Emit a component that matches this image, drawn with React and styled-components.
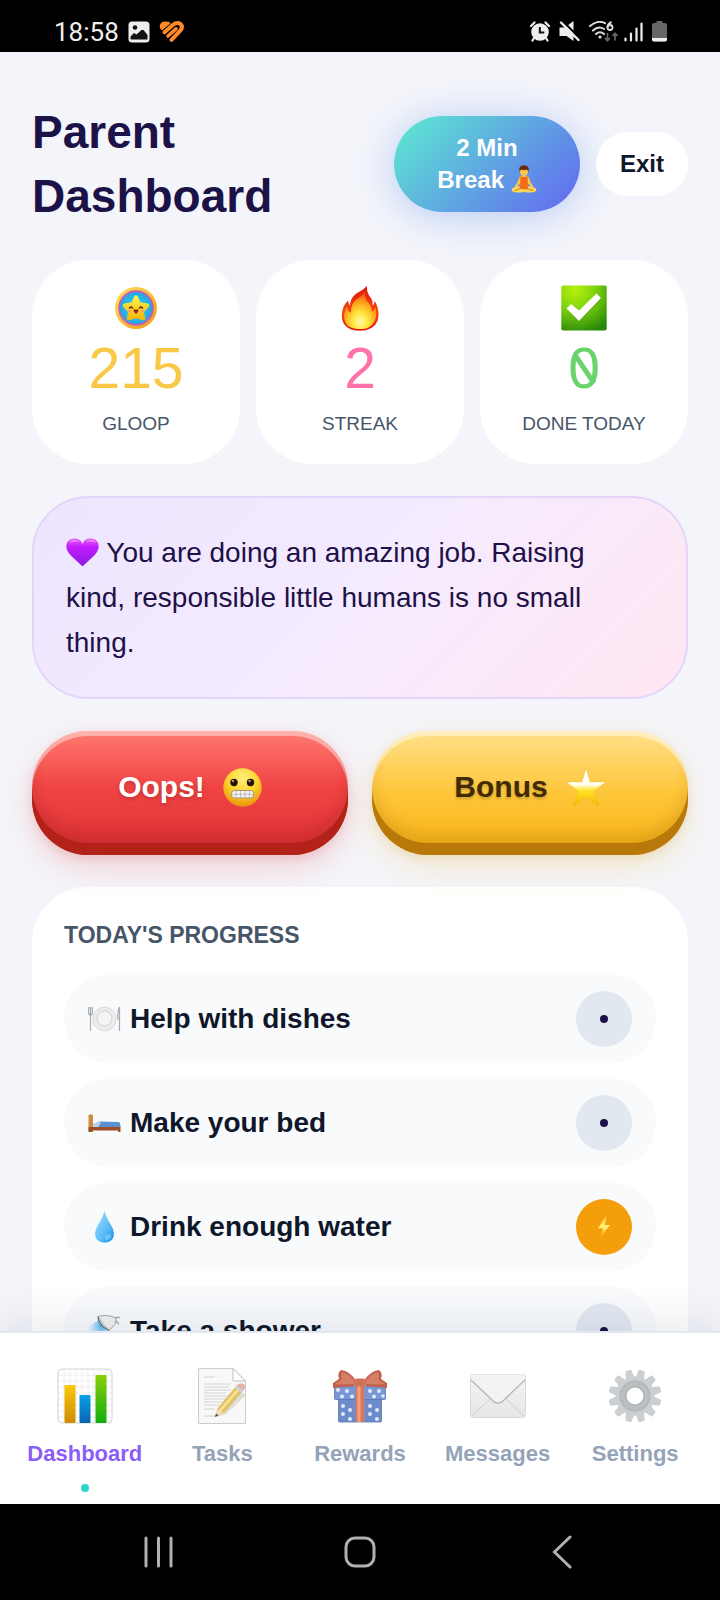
import React from "react";
import styled, { createGlobalStyle, css } from "styled-components";

const GlobalStyle = createGlobalStyle`
  *, *::before, *::after { box-sizing: border-box; }
  body { margin: 0; background: #f4f5fa; font-family: "Liberation Sans", Arial, sans-serif; color: #1e1147; }
  button { font-family: inherit; border: 0; cursor: pointer; }
  h1, h2, p, ul { margin: 0; padding: 0; }
  ul { list-style: none; }
  svg { display: block; flex: none; }
`;

/* ---------- layout ---------- */

const Screen = styled.div`
  display: flex;
  flex-direction: column;
  height: 100vh;
`;

const StatusBar = styled.div`
  display: flex;
  flex: none;
  align-items: center;
  justify-content: space-between;
  height: 52px;
  padding: 11px 53px 0 54px;
  background: #000;
`;

const StatusGroup = styled.div`
  display: flex;
  align-items: center;
  gap: ${(p) => p.$gap}px;
`;

const Clock = styled.time`
  font: 400 26px/32px Roboto, sans-serif;
  color: #eee;
`;

const Content = styled.main`
  display: flex;
  flex: 1;
  flex-direction: column;
  gap: 32px;
  min-height: 0;
  padding: 48px 32px 0;
  overflow-y: auto;
  scrollbar-width: none;
  & > * { flex: none; }
`;

const Header = styled.header`
  display: flex;
  align-items: center;
  justify-content: space-between;
  gap: 16px;
`;

const Title = styled.h1`
  flex: 1;
  max-width: 300px;
  font-size: 46px;
  line-height: 64px;
  color: #1b1247;
`;

const Actions = styled.div`
  display: flex;
  align-items: center;
  gap: 16px;
`;

const PillButton = styled.button`
  padding: 16px 24px;
  border-radius: 48px;
  font-size: 24px;
  font-weight: 700;
  line-height: 32px;
  ${(p) =>
    p.$accent
      ? css`
          min-width: 186px;
          color: #fff;
          background: linear-gradient(135deg, #5ce1d3 8%, #6366f1 100%);
          box-shadow: 0 4px 40px rgba(91, 140, 240, 0.4);
        `
      : css`
          color: #0f172a;
          background: #fff;
        `}
`;

const InlineIcon = styled.span`
  display: inline-block;
  vertical-align: -5px;
`;

const Stats = styled.section`
  display: grid;
  grid-template-columns: repeat(3, 1fr);
  gap: 16px;
`;

const StatCard = styled.div`
  display: flex;
  flex-direction: column;
  align-items: center;
  padding: 24px 8px;
  border-radius: 56px;
  background: #fff;
`;

const StatIcon = styled.div`
  display: flex;
  align-items: center;
  height: 48px;
`;

const StatValue = styled.div`
  position: relative;
  margin: 4px 0 8px;
  font-size: 57px;
  line-height: 64px;
  color: ${(p) => p.$color};
  ${(p) =>
    p.$slashed &&
    css`
      &::after {
        content: "";
        position: absolute;
        top: 50%;
        left: 50%;
        width: 5px;
        height: 34px;
        margin: -16px 0 0 -2px;
        background: currentColor;
        transform: rotate(-34deg);
      }
    `}
`;

const StatLabel = styled.div`
  font-size: 19px;
  line-height: 32px;
  color: #475569;
`;

const Note = styled.section`
  padding: 32px 64px 32px 32px;
  border: 2px solid #e3d5fa;
  border-radius: 56px;
  background: linear-gradient(135deg, #ede5ff 0%, #f5ebff 50%, #ffe6f1 100%);
  font-size: 28px;
  line-height: 45px;
`;

const Choices = styled.section`
  position: relative;
  z-index: 1;
  display: grid;
  grid-template-columns: 1fr 1fr;
  gap: 24px;
`;

const tones = {
  red: css`
    color: #fff;
    text-shadow: 0 2px 4px rgba(0, 0, 0, 0.2);
    background: linear-gradient(180deg, #ff7a70 0%, #f04444 45%, #dc2f33 100%);
    box-shadow: inset 0 5px 0 rgba(255, 255, 255, 0.42), inset 0 -12px 0 #b32218,
      inset 0 -20px 14px rgba(120, 20, 20, 0.2), 0 12px 32px rgba(239, 68, 68, 0.2),
      0 4px 10px rgba(160, 30, 30, 0.12);
  `,
  gold: css`
    color: #422a06;
    text-shadow: 0 2px 3px rgba(0, 0, 0, 0.2);
    background: linear-gradient(180deg, #ffe08a 0%, #fec63a 50%, #f8b112 100%);
    box-shadow: inset 0 5px 0 rgba(255, 255, 255, 0.45), inset 0 -12px 0 #b9780a,
      inset 0 -20px 14px rgba(130, 90, 0, 0.2), 0 12px 32px rgba(251, 191, 36, 0.2),
      0 4px 10px rgba(160, 110, 10, 0.12);
  `,
};

const ChunkyButton = styled.button`
  display: flex;
  align-items: center;
  justify-content: center;
  gap: 18px;
  height: 124px;
  padding: 0 24px 12px;
  border-radius: 56px;
  font-size: 30px;
  font-weight: 700;
  ${(p) => tones[p.$tone]}
`;

const Panel = styled.section`
  padding: 32px;
  border-radius: 56px 56px 0 0;
  background: #fff;
`;

const PanelTitle = styled.h2`
  margin-bottom: 24px;
  font-size: 23px;
  line-height: 32px;
  color: #475569;
`;

const TaskList = styled.ul`
  display: flex;
  flex-direction: column;
  gap: 16px;
`;

const TaskRow = styled.li`
  display: flex;
  align-items: center;
  gap: 9px;
  height: 88px;
  padding: 0 24px;
  border-radius: 44px;
  background: #f8fafc;
`;

const TaskName = styled.span`
  flex: 1;
  font-size: 28px;
  font-weight: 700;
  line-height: 40px;
  color: #0f172a;
`;

const Badge = styled.span`
  display: flex;
  align-items: center;
  justify-content: center;
  width: 56px;
  height: 56px;
  border-radius: 50%;
  background: ${(p) => (p.$active ? "#f59e0b" : "#e2e8f0")};
`;

const Dot = styled.span`
  width: 8px;
  height: 8px;
  border-radius: 50%;
  background: ${(p) => p.$color};
`;

const TabBar = styled.nav`
  position: relative;
  z-index: 2;
  display: grid;
  flex: none;
  grid-template-columns: repeat(5, 1fr);
  padding: 35px 16px 12px;
  border-top: 2px solid #e2e8f0;
  background: #fff;
  box-shadow: 0 -8px 40px rgba(30, 41, 80, 0.1);
`;

const Tab = styled.button`
  display: flex;
  flex-direction: column;
  align-items: center;
  padding: 0;
  background: none;
  font-size: 22px;
  font-weight: 700;
  line-height: 32px;
  color: ${(p) => (p.$active ? "#8b5cf6" : "#94a3b8")};
  svg { opacity: ${(p) => (p.$active ? 1 : 0.85)}; }
`;

const TabLabel = styled.span`
  margin: 14px 0;
`;

const SystemBar = styled.div`
  display: grid;
  flex: none;
  grid-template-columns: repeat(3, 1fr);
  place-items: center;
  height: 96px;
  padding: 0 57px;
  background: #000;
`;

const SystemButton = styled.button`
  padding: 0;
  background: none;
`;

/* ---------- status icons ---------- */

const PhotoIcon = () => (
  <svg width="22" height="22" viewBox="0 0 22 22" aria-hidden="true">
    <rect x="0.5" y="0.5" width="21" height="21" rx="3.5" fill="#eee" />
    <circle cx="7" cy="6.5" r="2.3" fill="#111" />
    <path d="M2.5 18v-2.500l3.500-3.500 2.500 1.500 5-4.500h2l4 5V18q0 .5-.5.5H3q-.5 0-.5-.5z" fill="#111" />
  </svg>
);

const HeartStripesIcon = () => (
  <svg width="26" height="22" viewBox="0 0 26 22" fill="none" stroke="#ff8a2a" strokeWidth="4" strokeLinecap="round" aria-hidden="true">
    <path d="M1.500 5Q2 1.500 6 1.300Q9 1 10.500 2.200L3 8.500Q1 7 1.500 5z" fill="#ff8a2a" strokeWidth="1.500" strokeLinejoin="round" />
    <path d="M5.500 11.300 14 3.800Q18 .8 21.500 3 24.500 6 21 10L12.500 18.800" />
    <path d="M9 15 17 7.800" strokeWidth="3.600" />
  </svg>
);

const AlarmIcon = () => (
  <svg width="20" height="21" viewBox="0 0 20 21" aria-hidden="true">
    <path d="M1 5 4.500 1.500M19 5 15.500 1.500M4 17 2.500 19.500M16 17l1.500 2.500" stroke="#eee" strokeWidth="2.200" strokeLinecap="round" />
    <circle cx="10" cy="11" r="8.800" fill="#eee" />
    <path d="M9.800 6v5.500h4.500" stroke="#111" strokeWidth="2" fill="none" />
  </svg>
);

const MuteIcon = () => (
  <svg width="21" height="21" viewBox="0 0 21 21" aria-hidden="true">
    <path d="M0.500 6.500H6L14.500 0v20L7.500 15H.5z" fill="#eee" />
    <path d="M3.500 0 20.500 17" stroke="#000" strokeWidth="2.200" />
    <path d="M2 1.500 19.500 19" stroke="#eee" strokeWidth="2.400" strokeLinecap="round" />
  </svg>
);

const WifiIcon = () => (
  <svg width="29" height="21" viewBox="0 0 29 21" fill="none" aria-hidden="true">
    <path d="M1 5Q9-1.500 16 2.200M4 9.500Q9.500 4.500 15 8M7 13q4-3.500 8 0" stroke="#ddd" strokeWidth="2" strokeLinecap="round" />
    <circle cx="11" cy="16" r="1.600" fill="#ddd" />
    <path d="M22.500 1Q18.500 3 18.500 6.500" stroke="#ddd" strokeWidth="2" />
    <circle cx="21" cy="6.500" r="2.500" stroke="#ddd" strokeWidth="1.800" />
    <path d="M18.500 12v7M16 17l2.500 2.800L21 17M26 19.500v-7M23.500 15l2.500-2.800L28.500 15" stroke="#666" strokeWidth="1.700" />
  </svg>
);

const SignalIcon = () => (
  <svg width="19" height="20" viewBox="0 0 19 20" stroke="#eee" strokeWidth="2.200" strokeLinecap="round" aria-hidden="true">
    <path d="M1.500 16.500v2M7 11.500v7M12.500 6.500v12M17.500 1.500v17" />
  </svg>
);

const BatteryIcon = () => (
  <svg width="15" height="21" viewBox="0 0 15 21" aria-hidden="true">
    <path d="M4.500 0h6v2H13q2 0 2 2v14.500q0 2-2 2H2q-2 0-2-2V4q0-2 2-2h2.500z" fill="#666" />
    <path d="M0 17h15v1.500q0 2-2 2H2q-2 0-2-2z" fill="#eee" />
  </svg>
);

/* ---------- emoji artwork ---------- */

const MeditateArt = () => (
  <svg width="26" height="28" viewBox="0 0 26 28" role="img" aria-label="Meditation">
    <path d="M9 11Q13 9.500 17 11l2.500 6 3 4.500-2 1-4-4.500V22h-7v-4l-4 4.500-2-1L6.500 17z" fill="#f8c64a" />
    <path d="M1 23.500Q6 20 13 22q7-2 12 1.500 1 3-2 3.500-5 1-10 0-5 1-10 0-3-.5-2-3.500z" fill="#fbd35c" />
    <path d="M4 25.500q6-3 9-1.500 4-1 9 1.500" stroke="#c98b1b" fill="none" />
    <path d="M9.500 11q3.500 2 7 0l.5 12.500q-4 1-8 0z" fill="#f36b16" />
    <circle cx="13" cy="6.500" r="4.200" fill="#f8c64a" />
    <path d="M8.500 7Q7 .5 13 .3 19 .5 17.500 7L16 4.500Q13 5.500 10 4.500z" fill="#6a2a12" />
  </svg>
);

const CoinArt = () => (
  <svg width="42" height="42" viewBox="0 0 42 42" role="img" aria-label="Star coin">
    <defs>
      <radialGradient id="coinSky"><stop offset="0" stopColor="#35d8f7" /><stop offset="1" stopColor="#1fa6e2" /></radialGradient>
      <linearGradient id="coinRim" x1="0" y1="0" x2="1" y2="1"><stop stopColor="#ffe25c" /><stop offset="1" stopColor="#f29a10" /></linearGradient>
      <linearGradient id="coinStar" x1="0" y1="0" x2="0" y2="1"><stop stopColor="#fff04a" /><stop offset="1" stopColor="#f9b90c" /></linearGradient>
    </defs>
    <circle cx="21" cy="21" r="21" fill="url(#coinRim)" />
    <circle cx="21" cy="21" r="16.800" fill="url(#coinSky)" stroke="#c05fb8" strokeWidth="2" />
    <path d="M21 10 24.500 17 32.500 18.300 27 24.500 28.500 31.500 21 29.500 13.500 31.500 15 24.500 9.500 18.300 17.500 17z" fill="url(#coinStar)" stroke="url(#coinStar)" strokeWidth="3.500" strokeLinejoin="round" />
    <path d="M14.500 21q1.500-2 3 0M24.500 21q1.500-2 3 0" fill="none" stroke="#53300d" strokeWidth="1.500" strokeLinecap="round" />
    <path d="M18.500 22.500h5q-.5 4-2.500 4t-2.500-4z" fill="#8d2416" />
    <circle cx="14.500" cy="24" r="1.500" fill="#ff9a70" /><circle cx="27.500" cy="24" r="1.500" fill="#ff9a70" />
  </svg>
);

const FireArt = () => (
  <svg width="38" height="46" viewBox="0 0 38 46" role="img" aria-label="Fire">
    <defs>
      <linearGradient id="fireOut" x1="0" y1="0" x2="0" y2="1"><stop stopColor="#d9150c" /><stop offset=".6" stopColor="#f9480e" /><stop offset="1" stopColor="#d8180d" /></linearGradient>
      <radialGradient id="fireIn" cx=".5" cy=".8" r=".7"><stop stopColor="#fffbb0" /><stop offset=".35" stopColor="#ffe63a" /><stop offset=".75" stopColor="#ff9a18" /><stop offset="1" stopColor="#fb5a10" /></radialGradient>
    </defs>
    <path d="M26 .5Q25 7 30 13 32 16 31.500 20.500 34 18.500 33.500 15.500 38 23 37.500 30.500 37 42 25 45.300 17 46.500 10 44.500 1 41 .8 31 .5 22 7 15.500 7 18.500 9 20.500 9 13 16 8 23 4.500 26 .5z" fill="url(#fireOut)" />
    <path d="M24 6q-1 8 4.500 13 2.500 3 2 7.500Q34 25 34.500 22q2.500 11-3 17.500-5 5-12 4.500Q8 44 4.500 38 1 30 6 21q0 5 4 7-.5-10 6.500-14.500Q22.500 10 24 6z" fill="url(#fireIn)" />
  </svg>
);

const CheckArt = () => (
  <svg width="46" height="46" viewBox="0 0 46 46" role="img" aria-label="Done">
    <defs>
      <radialGradient id="checkBg" cx=".3" cy=".1" r="1"><stop stopColor="#b8f00c" /><stop offset=".45" stopColor="#7ed30c" /><stop offset="1" stopColor="#27860a" /></radialGradient>
    </defs>
    <rect x=".3" y=".5" width="45.400" height="45" rx="2" fill="url(#checkBg)" />
    <path d="M7 25.500 11 20.500 18 26.500 35 9.500 40.500 14 18 37z" fill="#317d0b" opacity=".4" />
    <path d="M5.500 23.500 10 19 18 25.500 35.500 8.500 40 13 18 36z" fill="#fff" />
  </svg>
);

const PurpleHeartArt = () => (
  <svg width="33" height="29" viewBox="0 0 33 29" role="img" aria-label="Purple heart">
    <defs>
      <linearGradient id="heartBg" x1="0" y1="0" x2="0" y2="1"><stop stopColor="#e65cf2" /><stop offset=".3" stopColor="#c31cff" /><stop offset="1" stopColor="#8a18e0" /></linearGradient>
    </defs>
    <path d="M16.500 28.500Q14 26 8 20.500 0 14 .3 8 1 .5 8.500.5q6 0 8 5.500 2-5.500 8-5.500 7.500 0 8.200 7.500.3 6-7.700 12.500-6 5.500-8.500 8z" fill="url(#heartBg)" />
    <path d="M3 5q2-3.500 6-3.300 3 .3 4.500 2.500Q8 2.500 3 5zM19.500 4q2-2.300 5-2.300 3.500 0 5.500 3.300-5-2.500-10.500-1z" fill="#fff" opacity=".35" />
  </svg>
);

const GrimaceArt = () => (
  <svg width="39" height="39" viewBox="0 0 39 39" role="img" aria-label="Grimacing face">
    <defs>
      <radialGradient id="faceBg" cx=".5" cy=".25" r=".8"><stop stopColor="#fff07c" /><stop offset=".5" stopColor="#fdd22b" /><stop offset="1" stopColor="#e78b0b" /></radialGradient>
    </defs>
    <circle cx="19.500" cy="19.500" r="19.200" fill="url(#faceBg)" />
    <circle cx="11" cy="14.500" r="3.700" fill="#24140a" /><circle cx="27.500" cy="14.500" r="3.700" fill="#24140a" />
    <circle cx="10" cy="13" r="1.200" fill="#b89b75" /><circle cx="26.500" cy="13" r="1.200" fill="#b89b75" />
    <rect x="8.500" y="22.500" width="22" height="7.500" rx="3" fill="#f4f4f4" stroke="#a8986f" />
    <path d="M9 26.300h21M13 23v7M17.500 23v7M22 23v7M26.500 23v7" stroke="#b4b4b4" strokeWidth=".8" />
  </svg>
);

const StarArt = () => (
  <svg width="40" height="39" viewBox="0 0 40 39" role="img" aria-label="Star">
    <defs>
      <linearGradient id="starBg" x1="0" y1="0" x2="0" y2="1"><stop stopColor="#fff" /><stop offset=".42" stopColor="#fffef0" /><stop offset=".58" stopColor="#ffe325" /><stop offset="1" stopColor="#f7b500" /></linearGradient>
    </defs>
    <path d="M20 .5 24 14 39.500 14 27.500 23.500 33 38.500 20 29 7 38.500 12.500 23.500 .5 14 16 14z" fill="url(#starBg)" stroke="#dda81f" strokeOpacity=".35" strokeWidth=".7" />
  </svg>
);

const DishesArt = () => (
  <svg width="33" height="26" viewBox="0 0 33 26" role="img" aria-label="Plate">
    <circle cx="16.500" cy="13" r="11.800" fill="#ececec" stroke="#dadada" />
    <circle cx="16.500" cy="12.500" r="7.500" fill="#f5f5f5" stroke="#d2d2d2" />
    <path d="M2.500 1v24M.7 1v6q0 2 1.800 2t1.800-2V1M31.500 1v24M31.500 1q-2.500 4-1.500 12h1.500" stroke="#a8abb0" strokeWidth="1.200" fill="none" />
  </svg>
);

const BedArt = () => (
  <svg width="33" height="32" viewBox="0 0 33 32" role="img" aria-label="Bed">
    <path d="M.5 8q2-1.500 4.500 0v17H.5z" fill="#d18a43" />
    <path d="M5 17.500 11 14.500l20 .5q1.500 1 1.500 5.500H5z" fill="#5a8fd0" />
    <path d="M5 17.500 11 14.500l2 1-3 5H5z" fill="#b7d2ed" />
    <path d="M.5 20h32v4.500q-1 1-2.500 0v-1H4.500v1q-2 1-4 0z" fill="#9c4f24" />
  </svg>
);

const DropArt = () => (
  <svg width="33" height="32" viewBox="0 0 33 32" role="img" aria-label="Water drop">
    <defs>
      <linearGradient id="dropBg" x1="0" y1="0" x2="1" y2="1"><stop stopColor="#a3ddff" /><stop offset=".6" stopColor="#5cbcf8" /><stop offset="1" stopColor="#178ce4" /></linearGradient>
    </defs>
    <path d="M16.500 0Q18 6 23 14q3 4.500 3 8.500 0 9-9.500 9.300Q7 31.500 7 22.500 7 18.500 10 14 15 6 16.500 0z" fill="url(#dropBg)" />
    <ellipse cx="20" cy="26" rx="3.500" ry="2.500" fill="#c4eaff" opacity=".35" transform="rotate(-35 20 26)" />
  </svg>
);

const ShowerArt = () => (
  <svg width="33" height="32" viewBox="0 0 33 32" role="img" aria-label="Shower">
    <defs>
      <radialGradient id="spray" cx=".7" cy=".2" r=".8"><stop stopColor="#42adf0" /><stop offset="1" stopColor="#b2e2ff" stopOpacity="0" /></radialGradient>
    </defs>
    <path d="M11 5 0 12v18h19l1-12z" fill="url(#spray)" />
    <path d="M27 4q2-3 5-1M28 6l3 3" stroke="#aaa" strokeWidth="1.500" fill="none" />
    <path d="M10 1.500Q20-1 28 3l-.5 6-6.500 6.500Q15 10 10 1.500z" fill="#f0f0f0" stroke="#a2a5a8" />
    <path d="M10 1.500Q10 10 21 15.500" stroke="#6e787d" strokeWidth="1.300" fill="none" />
  </svg>
);

const BoltArt = () => (
  <svg width="14" height="24" viewBox="0 0 14 24" role="img" aria-label="In progress">
    <defs>
      <linearGradient id="boltBg" x1="0" y1="0" x2="0" y2="1"><stop stopColor="#f9c22c" /><stop offset=".5" stopColor="#fff27a" /><stop offset="1" stopColor="#f6a91a" /></linearGradient>
    </defs>
    <path d="M9.500 0 1 13.500h5L3.500 22.500 13 10H8z" fill="url(#boltBg)" />
  </svg>
);

const ChartArt = () => (
  <svg width="56" height="56" viewBox="0 0 56 56" aria-hidden="true">
    <defs>
      <linearGradient id="barA" x1="0" y1="0" x2="0" y2="1"><stop stopColor="#f9c80b" /><stop offset="1" stopColor="#d08b08" /></linearGradient>
      <linearGradient id="barB" x1="0" y1="0" x2="0" y2="1"><stop stopColor="#08a0e8" /><stop offset="1" stopColor="#0864b0" /></linearGradient>
      <linearGradient id="barC" x1="0" y1="0" x2="0" y2="1"><stop stopColor="#8bd008" /><stop offset="1" stopColor="#10ac10" /></linearGradient>
    </defs>
    <rect x="1" y="1" width="54" height="54" rx="4" fill="#fff" stroke="#d3d3d3" />
    <path d="M7 1v54M13 1v54M19 1v54M25 1v54M31 1v54M37 1v54M43 1v54M49 1v54M1 7h54M1 13h54M1 19h54M1 25h54M1 31h54M1 37h54M1 43h54M1 49h54" stroke="#ddd" strokeWidth=".7" strokeDasharray="2 1" />
    <rect x="7.500" y="17" width="11" height="38" rx="1" fill="url(#barA)" />
    <rect x="22.500" y="27" width="11" height="28" rx="1" fill="url(#barB)" />
    <rect x="38.500" y="7" width="11" height="48" rx="1" fill="url(#barC)" />
  </svg>
);

const MemoArt = () => (
  <svg width="56" height="56" viewBox="0 0 56 56" aria-hidden="true">
    <path d="M4.500.5H39L51.500 13V55.500h-47z" fill="#f7f7f7" stroke="#c4c4c4" />
    <path d="M39 .5V13h12.500z" fill="#fff" stroke="#b5b5b5" />
    <path d="M10 9h11M10 16h27M10 19h25M10 22h27M10 25h22M10 28h25M10 31h24M10 34h26M10 37h22M10 41h11M10 48h12" stroke="#c6c6c6" strokeWidth=".9" />
    <path d="M26 46 46 24l6 3-20 19-9 3z" fill="#8b7b62" opacity=".25" />
    <path d="M23 41 42 18l7 5-19 22-9 4z" fill="#dfb849" />
    <path d="M25 42 44 20l2 1.500-19 22z" fill="#f5de8b" />
    <path d="M42 18q4-5 9-1 1 3-2 6z" fill="#dfa69a" />
    <path d="M40.500 20l7 5 2-2.500-7-5z" fill="#c9c9c9" />
    <path d="M23 41 21 49 30 45z" fill="#f0d7ab" /><path d="M22 45.500 21 49l3.500-1.500z" fill="#333" />
  </svg>
);

const GiftArt = () => (
  <svg width="56" height="56" viewBox="0 0 56 56" aria-hidden="true">
    <rect x="6.500" y="29" width="43" height="25" rx="1" fill="#5277c5" stroke="#405da4" strokeWidth=".8" />
    <rect x="2.500" y="18.500" width="51" height="13" rx="1" fill="#6085d2" stroke="#405da4" strokeWidth=".8" />
    <g fill="#dce7fb">
      <circle cx="6" cy="22" r="2" /><circle cx="15" cy="23" r="2" /><circle cx="10" cy="28.500" r="2" /><circle cx="20" cy="28.500" r="2" />
      <circle cx="38" cy="23" r="2" /><circle cx="47" cy="23" r="2" /><circle cx="42" cy="28.500" r="2" /><circle cx="51" cy="28" r="1.800" />
      <circle cx="11" cy="38" r="2" /><circle cx="18" cy="42" r="2" /><circle cx="11" cy="46" r="2" /><circle cx="18" cy="51" r="2" />
      <circle cx="38" cy="38" r="2" /><circle cx="45" cy="42" r="2" /><circle cx="38" cy="46" r="2" /><circle cx="45" cy="51" r="2" />
    </g>
    <path d="M23.500 17h9v37h-9z" fill="#d3623e" /><path d="M25.500 17h3v37h-3z" fill="#e89473" />
    <path d="M24 13Q18 3 9 2 5 5 7 11L1 15v5l21-2zM32 13Q38 3 47 2q4 3 2 9l6 4v5l-21-2z" fill="#b8442f" />
    <path d="M23 13Q17 5 10 4.500q-2 4 0 7-3 2-7 4.500 9 1 19 0zM33 13q6-8 13-8.500 2 4 0 7 3 2 7 4.500-9 1-19 0z" fill="#d0674e" />
    <rect x="22" y="10.500" width="12" height="8" rx="3" fill="#c65a40" />
  </svg>
);

const EnvelopeArt = () => (
  <svg width="56" height="56" viewBox="0 0 56 56" aria-hidden="true">
    <defs>
      <linearGradient id="mailBg" x1="0" y1="0" x2="0" y2="1"><stop stopColor="#f4f4f4" /><stop offset="1" stopColor="#e2e2e2" /></linearGradient>
    </defs>
    <rect x=".5" y="6.500" width="55" height="43" rx="3" fill="url(#mailBg)" stroke="#d3d3d3" />
    <path d="M2 48 21 30M54 48 35 30" stroke="#c5c5c5" />
    <path d="M1 10Q1 6.500 4 6.500H52Q55 6.500 55 10L35 30q-7 9-14 0z" fill="#f2f2f2" />
    <path d="M1 12 21 31q7 8 14 0L55 12" fill="none" stroke="#aaa" strokeWidth="1.300" />
  </svg>
);

const GearArt = () => (
  <svg width="56" height="56" viewBox="0 0 56 56" aria-hidden="true">
    <g fill="#c3c7ca">
      {[15, 45, 75, 105, 135, 165, 195, 225, 255, 285, 315, 345].map((a) => (
        <path key={a} d="M23.500 11 24.800 2Q28 .6 31.200 2L32.500 11z" transform={`rotate(${a} 28 28)`} />
      ))}
      <path fillRule="evenodd" d="M28 8.500a19.500 19.500 0 1 0 .01 0zM28 19.500a8.500 8.500 0 1 1-.01 0z" />
    </g>
    <circle cx="28" cy="28" r="12" fill="none" stroke="#a5a9ad" strokeWidth="7" />
    <circle cx="28" cy="28" r="12" fill="none" stroke="#b0b4b6" strokeWidth="4" />
  </svg>
);

/* ---------- data ---------- */

const stats = [
  { label: "GLOOP", value: "215", color: "#f9c846", Art: CoinArt },
  { label: "STREAK", value: "2", color: "#ff72ab", Art: FireArt },
  { label: "DONE TODAY", value: "0", color: "#6bd36e", Art: CheckArt },
];

const tasks = [
  { name: "Help with dishes", Art: DishesArt },
  { name: "Make your bed", Art: BedArt },
  { name: "Drink enough water", Art: DropArt, active: true },
  { name: "Take a shower", Art: ShowerArt },
];

const tabs = [
  { name: "Dashboard", Art: ChartArt, active: true },
  { name: "Tasks", Art: MemoArt },
  { name: "Rewards", Art: GiftArt },
  { name: "Messages", Art: EnvelopeArt },
  { name: "Settings", Art: GearArt },
];

export default function App() {
  return (
    <Screen>
      <GlobalStyle />
      <StatusBar>
        <StatusGroup $gap={9}>
          <Clock>18:58</Clock>
          <PhotoIcon />
          <HeartStripesIcon />
        </StatusGroup>
        <StatusGroup $gap={9}>
          <AlarmIcon />
          <MuteIcon />
          <StatusGroup $gap={6}>
            <WifiIcon />
            <SignalIcon />
          </StatusGroup>
          <BatteryIcon />
        </StatusGroup>
      </StatusBar>

      <Content>
        <Header>
          <Title>Parent Dashboard</Title>
          <Actions>
            <PillButton type="button" $accent>
              2 Min
              <br />
              Break <InlineIcon><MeditateArt /></InlineIcon>
            </PillButton>
            <PillButton type="button">Exit</PillButton>
          </Actions>
        </Header>

        <Stats>
          {stats.map(({ label, value, color, Art }) => (
            <StatCard key={label}>
              <StatIcon><Art /></StatIcon>
              <StatValue $color={color} $slashed={value === "0"}>{value}</StatValue>
              <StatLabel>{label}</StatLabel>
            </StatCard>
          ))}
        </Stats>

        <Note>
          <p>
            <InlineIcon><PurpleHeartArt /></InlineIcon> You are doing an amazing job. Raising kind, responsible
            little humans is no small thing.
          </p>
        </Note>

        <Choices>
          <ChunkyButton type="button" $tone="red">Oops! <GrimaceArt /></ChunkyButton>
          <ChunkyButton type="button" $tone="gold">Bonus <StarArt /></ChunkyButton>
        </Choices>

        <Panel>
          <PanelTitle>TODAY'S PROGRESS</PanelTitle>
          <TaskList>
            {tasks.map(({ name, Art, active }) => (
              <TaskRow key={name}>
                <Art />
                <TaskName>{name}</TaskName>
                <Badge $active={active}>{active ? <BoltArt /> : <Dot $color="#1e1147" />}</Badge>
              </TaskRow>
            ))}
          </TaskList>
        </Panel>
      </Content>

      <TabBar>
        {tabs.map(({ name, Art, active }) => (
          <Tab key={name} type="button" $active={active} aria-current={active ? "page" : undefined}>
            <Art />
            <TabLabel>{name}</TabLabel>
            <Dot $color={active ? "#2dd4cf" : "transparent"} />
          </Tab>
        ))}
      </TabBar>

      <SystemBar>
        <SystemButton type="button" aria-label="Recent apps">
          <svg width="32" height="34" viewBox="0 0 32 34" stroke="#b0b0b0" strokeWidth="3" strokeLinecap="round">
            <path d="M4 3v28M16.500 3v28M29 3v28" />
          </svg>
        </SystemButton>
        <SystemButton type="button" aria-label="Home">
          <svg width="34" height="34" viewBox="0 0 34 34" fill="none" stroke="#b0b0b0" strokeWidth="3">
            <rect x="3" y="3" width="28" height="28" rx="9" />
          </svg>
        </SystemButton>
        <SystemButton type="button" aria-label="Back">
          <svg width="20" height="34" viewBox="0 0 20 34" fill="none" stroke="#b0b0b0" strokeWidth="3" strokeLinecap="round">
            <path d="M18 2 2.500 17 18 32" />
          </svg>
        </SystemButton>
      </SystemBar>
    </Screen>
  );
}
